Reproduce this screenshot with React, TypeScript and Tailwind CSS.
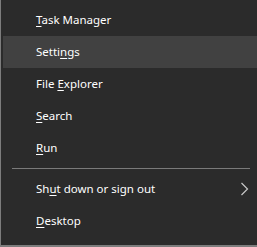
import React from 'react';

type Item = { pre: string; key: string; post: string; active?: boolean; sub?: boolean };

const top: Item[] = [
  { pre: '', key: 'T', post: 'ask Manager' },
  { pre: 'Setti', key: 'n', post: 'gs', active: true },
  { pre: 'File ', key: 'E', post: 'xplorer' },
  { pre: '', key: 'S', post: 'earch' },
  { pre: '', key: 'R', post: 'un' },
];

const bottom: Item[] = [
  { pre: 'Sh', key: 'u', post: 't down or sign out', sub: true },
  { pre: '', key: 'D', post: 'esktop' },
];

function Row({ item }: { item: Item }) {
  return (
    <div
      className={`flex h-[32px] items-center justify-between pl-[33px] pr-[8px] ${
        item.active ? 'bg-[#414141]' : ''
      }`}
    >
      <span className="whitespace-pre">
        {item.pre}
        <span className="underline underline-offset-[2px]">{item.key}</span>
        {item.post}
      </span>
      {item.sub && (
        <svg width="9" height="14" viewBox="0 0 9 14">
          <polyline points="1.5,1 7.5,7 1.5,13" fill="none" stroke="#c8c8c8" strokeWidth="1.2" />
        </svg>
      )}
    </div>
  );
}

export default function App() {
  return (
    <div
      className="w-[257px] h-[247px] bg-[#2b2b2b] border-l border-b-2 border-[#7d7d7d] text-white text-[11.5px] overflow-hidden"
      style={{ fontFamily: '"Segoe UI", "Noto Sans", sans-serif' }}
    >
      <div className="pt-[4px] pl-[2px]">
        {top.map((it) => (
          <Row key={it.post} item={it} />
        ))}
      </div>
      <div className="mt-[4px] mb-[4px] ml-[11px] mr-[7px] h-px bg-[#7a7a7a]" />
      <div className="pl-[2px]">
        {bottom.map((it) => (
          <Row key={it.post} item={it} />
        ))}
      </div>
    </div>
  );
}
